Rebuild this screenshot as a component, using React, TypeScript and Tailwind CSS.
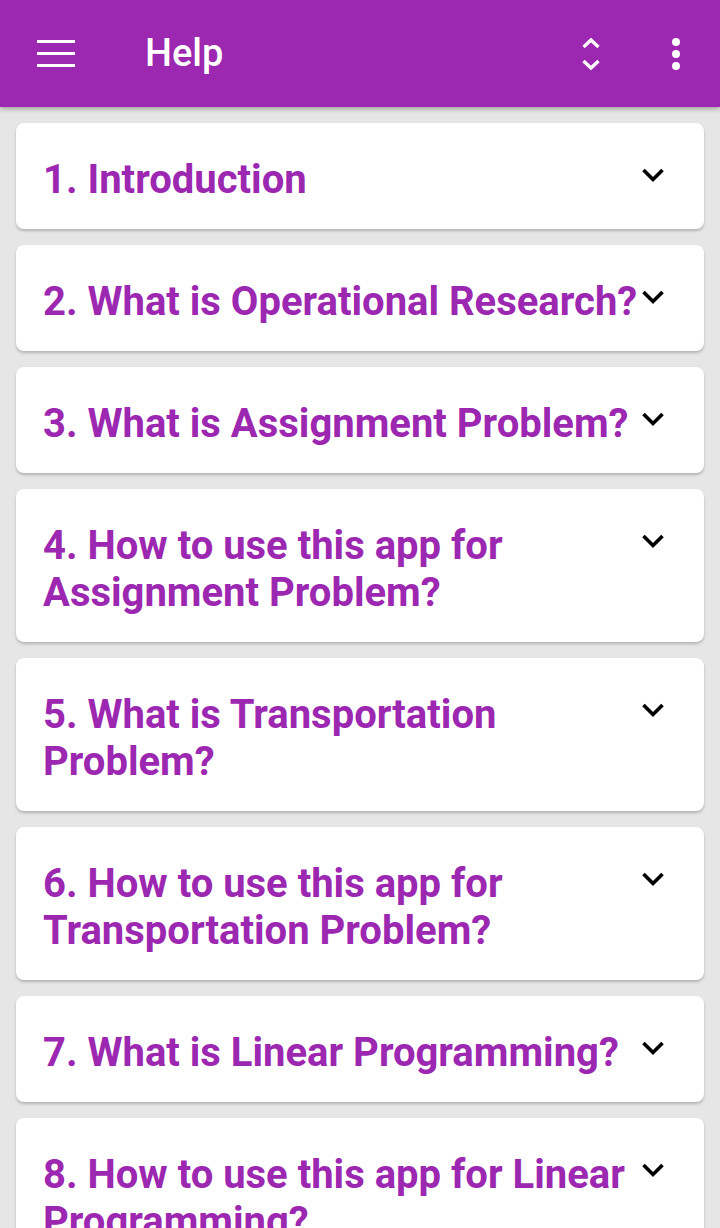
import React from 'react';

const topics: string[] = [
  '1. Introduction',
  '2. What is Operational Research?',
  '3. What is Assignment Problem?',
  '4. How to use this app for Assignment Problem?',
  '5. What is Transportation Problem?',
  '6. How to use this app for Transportation Problem?',
  '7. What is Linear Programming?',
  '8. How to use this app for Linear Programming?',
];

const Chevron: React.FC = () => (
  <svg width="24" height="16" viewBox="0 0 24 16" className="mt-[11px] shrink-0">
    <polyline points="2.5,3 12,12.5 21.5,3" fill="none" stroke="#000" strokeWidth="3.6" />
  </svg>
);

const TopBar: React.FC = () => (
  <header className="relative z-10 flex h-[107px] shrink-0 items-center bg-[#9c27b0] shadow-[0_2px_5px_rgba(0,0,0,0.3)]">
    {/* hamburger */}
    <div className="ml-[37px] flex w-[38px] flex-col gap-[8.5px]">
      <span className="block h-[3.5px] bg-white" />
      <span className="block h-[3.5px] bg-white" />
      <span className="block h-[3.5px] bg-white" />
    </div>
    <h1 className="ml-[70px] flex-1 text-[38px] font-medium text-white">Help</h1>
    {/* expand/collapse all */}
    <svg width="20" height="32" viewBox="0 0 20 32" className="mr-[71px]">
      <polyline points="2.5,9 10,2 17.5,9" fill="none" stroke="#fff" strokeWidth="3.4" />
      <polyline points="2.5,23 10,30 17.5,23" fill="none" stroke="#fff" strokeWidth="3.4" />
    </svg>
    {/* overflow */}
    <div className="mr-[40px] flex flex-col items-center gap-[4px]">
      <span className="block h-[8px] w-[8px] rounded-full bg-white" />
      <span className="block h-[8px] w-[8px] rounded-full bg-white" />
      <span className="block h-[8px] w-[8px] rounded-full bg-white" />
    </div>
  </header>
);

export default function App() {
  return (
    <div
      className="flex h-[1228px] w-[720px] flex-col overflow-hidden bg-[#e6e6e6]"
      style={{ fontFamily: 'Roboto, "Noto Sans", sans-serif' }}
    >
      <TopBar />
      <main className="flex flex-col gap-[16px] px-[16px] pt-[16px]">
        {topics.map((t) => (
          <div
            key={t}
            className="flex items-start rounded-[8px] bg-white pb-[26px] pl-[27px] pr-[39px] pt-[33px] shadow-[0_2px_3px_rgba(0,0,0,0.22)]"
          >
            <p className="w-[598px] shrink-0 text-[40px] font-bold leading-[47px] text-[#9c27b0]">{t}</p>
            <Chevron />
          </div>
        ))}
      </main>
    </div>
  );
}
